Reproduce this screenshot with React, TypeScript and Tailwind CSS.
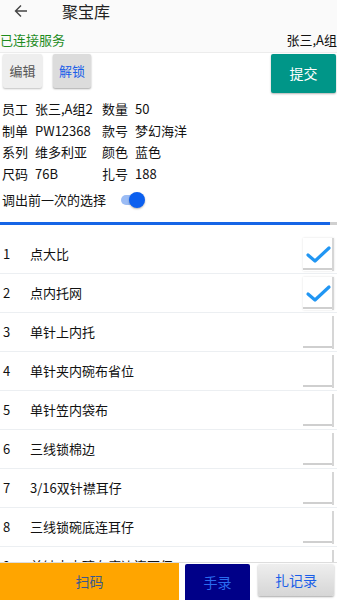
import React from "react";

const items = [
  { no: 1, name: "点大比", checked: true },
  { no: 2, name: "点内托网", checked: true },
  { no: 3, name: "单针上内托", checked: false },
  { no: 4, name: "单针夹内碗布省位", checked: false },
  { no: 5, name: "单针笠内袋布", checked: false },
  { no: 6, name: "三线锁棉边", checked: false },
  { no: 7, name: "3/16双针襟耳仔", checked: false },
  { no: 8, name: "三线锁碗底连耳仔", checked: false },
  { no: 9, name: "单针夹内碗布底边连耳仔", checked: false },
];

const info = [
  ["员工", "张三,A组2", "数量", "50"],
  ["制单", "PW12368", "款号", "梦幻海洋"],
  ["系列", "维多利亚", "颜色", "蓝色"],
  ["尺码", "76B", "扎号", "188"],
];

const CheckBox = ({ checked }: { checked: boolean }) => (
  <div className={"relative w-[31px] h-[33px] bg-white border-r-2 border-[#d6d6d6] " + (checked ? "shadow-[0_0_2px_rgba(0,0,0,0.12)]" : "")}>
    <div className="absolute left-0 right-0 bottom-[1px] h-[2px] bg-[#cfcfcf]" />
    {checked && (
      <svg viewBox="0 0 31 33" className="absolute inset-0 w-[31px] h-[33px]">
        <path d="M5 17 L12 23 L26 10" fill="none" stroke="#2196f3" strokeWidth="3.2" strokeLinecap="round" strokeLinejoin="round" />
      </svg>
    )}
  </div>
);

const App = () => {
  return (
    <div className="w-[337px] h-[600px] flex flex-col bg-white overflow-hidden text-black" style={{ fontFamily: '"Noto Sans CJK SC", "Noto Sans", sans-serif' }}>
      <div className="h-[22px] flex items-center bg-[#fafafa]">
        <svg viewBox="0 0 16 16" className="w-[16px] h-[16px] ml-[13px]">
          <path d="M14 8 H2.5 M8 2.5 L2.5 8 L8 13.5" fill="none" stroke="#444" strokeWidth="1.4" />
        </svg>
        <span className="ml-[33px] text-[16px] leading-[20px] text-[#222]">聚宝库</span>
      </div>
      <div className="h-[31px] pt-[5px] flex items-center justify-between bg-[#fafafa] border-b border-[#ececec]">
        <span className="text-[13px] text-[#1e8c1e]">已连接服务</span>
        <span className="text-[13px] text-[#111]">张三,A组</span>
      </div>
      <div className="flex items-start pt-[1px] h-[42px]">
        <div className="ml-[3px] w-[39px] h-[34px] flex items-center justify-center bg-[#eeeeee] shadow-[0_1px_2px_rgba(0,0,0,0.25)] rounded-[2px] text-[13px] text-[#555]">编辑</div>
        <div className="ml-[11px] w-[38px] h-[34px] flex items-center justify-center bg-[#dcdcdc] shadow-[0_1px_2px_rgba(0,0,0,0.35)] rounded-[2px] text-[13px] text-[#1a5ee8]">解锁</div>
        <div className="ml-auto mr-[1px] w-[65px] h-[39px] flex items-center justify-center bg-[#009688] rounded-[2px] shadow-[0_1px_2px_rgba(0,0,0,0.3)] text-[14px] text-white">提交</div>
      </div>
      <div className="flex flex-col pt-[3px]">
        {info.map((r) => (
          <div key={r[0]} className="h-[21.5px] flex items-center text-[13px] text-[#111]">
            <span className="w-[35px] pl-[2px]">{r[0]}</span>
            <span className="w-[67px]">{r[1]}</span>
            <span className="w-[33px]">{r[2]}</span>
            <span>{r[3]}</span>
          </div>
        ))}
      </div>
      <div className="h-[28px] flex items-center mt-[2px]">
        <span className="pl-[2px] text-[13px] text-[#111]">调出前一次的选择</span>
        <div className="relative ml-[15px] w-[24px] h-[16px] flex items-center">
          <div className="w-[20px] h-[10px] rounded-full bg-[#9bbcf5]" />
          <div className="absolute left-[8px] top-0 w-[16px] h-[16px] rounded-full bg-[#0b5fef] shadow-[0_1px_2px_rgba(0,0,0,0.3)]" />
        </div>
      </div>
      <div className="flex h-[3px] mt-[8px]">
        <div className="w-[330px] bg-[#1565e6]" />
        <div className="flex-1 bg-[#d0d0d0]" />
      </div>
      <div className="flex-1 overflow-hidden mt-[10px]">
        {items.map((it) => (
          <div key={it.no} className="h-[39px] flex items-center border-b border-[#eceff2] bg-white">
            <span className="w-[30px] pl-[3px] text-[13px] text-[#111]">{it.no}</span>
            <span className="flex-1 text-[13px] text-[#111]">{it.name}</span>
            <div className="mr-[3px]">
              <CheckBox checked={it.checked} />
            </div>
          </div>
        ))}
      </div>
      <div className="h-[38px] flex items-stretch bg-white border-t border-[#dddddd]">
        <div className="w-[179px] bg-[#ffa500] flex items-center justify-center text-[14px] text-[#3c5a8a]">扫码</div>
        <div className="ml-[6px] mt-[1px] w-[65px] bg-[#000088] flex items-center justify-center text-[14px] text-[#2a6cf0] rounded-t-[2px]">手录</div>
        <div className="ml-[8px] mt-[1px] mb-[4px] w-[76px] bg-gradient-to-b from-[#eeeeee] to-[#d6d6d6] shadow-[0_1px_2px_rgba(0,0,0,0.35)] rounded-[2px] flex items-center justify-center text-[14px] text-[#1a5ee8]">扎记录</div>
      </div>
    </div>
  );
};

export default App;
